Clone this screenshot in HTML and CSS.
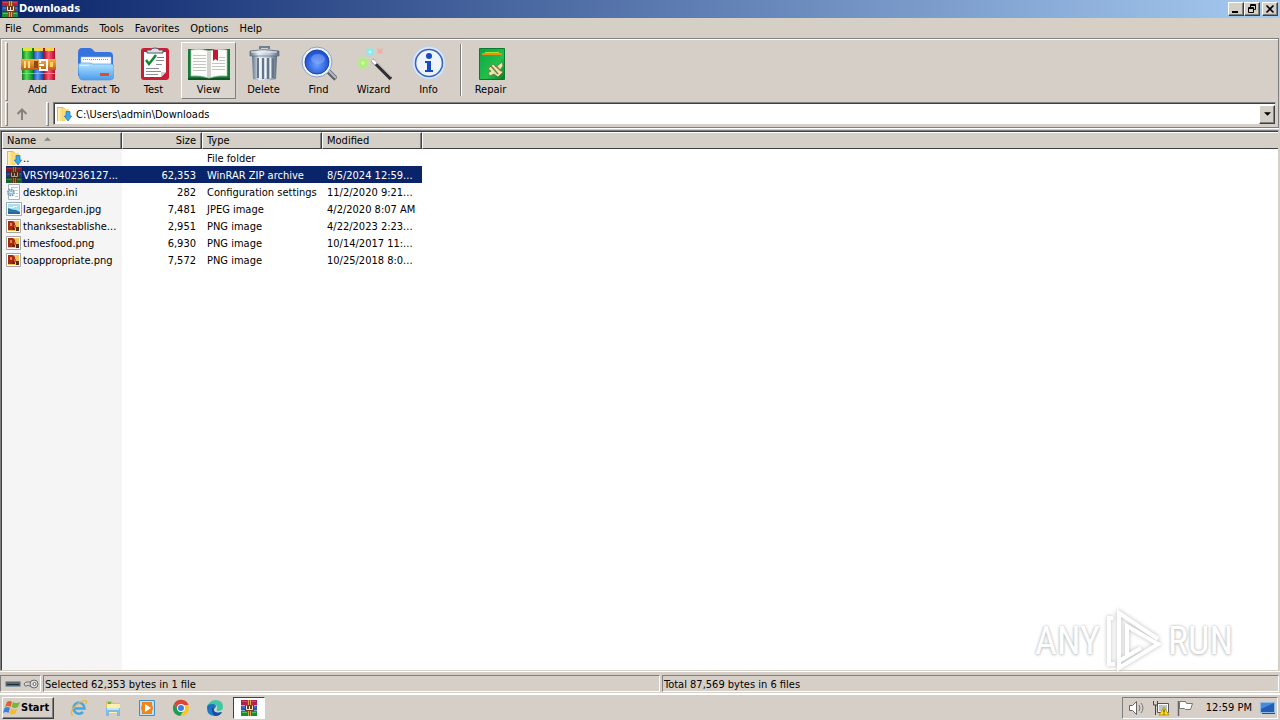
FILE: index.html
```html
<!DOCTYPE html>
<html lang="en">
<head>
<meta charset="utf-8">
<title>Downloads</title>
<link rel="stylesheet" href="styles.css">
</head>
<body>
<svg class="defs" aria-hidden="true">
  <defs>
    <linearGradient id="gGreen"><stop offset="0" stop-color="#087a20"/><stop offset=".4" stop-color="#5ade58"/><stop offset="1" stop-color="#07852b"/></linearGradient>
    <linearGradient id="gBlue"><stop offset="0" stop-color="#173f9c"/><stop offset=".4" stop-color="#5a9cf5"/><stop offset="1" stop-color="#163a96"/></linearGradient>
    <linearGradient id="gRed"><stop offset="0" stop-color="#a80c26"/><stop offset=".4" stop-color="#ff5a72"/><stop offset="1" stop-color="#b00d2c"/></linearGradient>
    <linearGradient id="gBelt" x2="0" y2="1"><stop offset="0" stop-color="#f9b04a"/><stop offset=".5" stop-color="#e08a2c"/><stop offset="1" stop-color="#b85c12"/></linearGradient>
    <linearGradient id="gFolder" x2="0" y2="1"><stop offset="0" stop-color="#b5e3ff"/><stop offset="1" stop-color="#4a9cec"/></linearGradient>
    <linearGradient id="gMetal"><stop offset="0" stop-color="#66758a"/><stop offset=".3" stop-color="#e6edf5"/><stop offset=".7" stop-color="#b4c2d2"/><stop offset="1" stop-color="#5b697c"/></linearGradient>
    <radialGradient id="gLens" cx=".5" cy=".6"><stop offset="0" stop-color="#6fa0ff"/><stop offset="1" stop-color="#1f55d4"/></radialGradient>
    <linearGradient id="gRepair" x2="1" y2="1"><stop offset="0" stop-color="#0aa545"/><stop offset=".6" stop-color="#23c04a"/><stop offset="1" stop-color="#087d2c"/></linearGradient>
    <radialGradient id="gSpark"><stop offset="0" stop-color="#eaffc8"/><stop offset=".4" stop-color="#a6f26a"/><stop offset="1" stop-color="#a6ff6a" stop-opacity="0"/></radialGradient>
    <radialGradient id="gSpark2"><stop offset="0" stop-color="#fff"/><stop offset=".4" stop-color="#75f2f0"/><stop offset="1" stop-color="#75f2f0" stop-opacity="0"/></radialGradient>
    <linearGradient id="gYellow"><stop offset="0" stop-color="#fff3b0"/><stop offset="1" stop-color="#efc65a"/></linearGradient>
    <linearGradient id="gEdge" x2="1" y2="1"><stop offset="0" stop-color="#1b63b8"/><stop offset="1" stop-color="#1d9be0"/></linearGradient>
  </defs>
  <symbol id="rar" viewBox="0 0 16 16">
    <path fill="#b31f4b" d="M0 0h16v5H0z"/><path fill="#2b55a8" d="M0 5.500h16v5H0z"/><path fill="#1f8a3a" d="M0 11h16v5H0z"/>
    <path fill="#e43d5f" d="M1 1h14v1H1z"/><path fill="#5d8ce0" d="M1 6.500h14v1H1z"/><path fill="#4fc45d" d="M1 12h14v1H1z"/>
    <path fill="#8c4f1c" d="M6 0h5v16H6z"/><path fill="#d9a24b" d="M7 0h1v16H7zM9 0h1v16H9z"/>
    <path fill="#703a20" d="M4 5h9v6H4z"/><path fill="none" stroke="#f4ead8" d="M5.500 5.500v4h6v-4M8.500 6v3"/>
  </symbol>
  <symbol id="dlfolder" viewBox="0 0 16 16">
    <path fill="#e3b94f" d="M1 1h6l2 2v12H1z"/><path fill="url(#gYellow)" d="M2 2h7v13H2z"/><path fill="#f9dc7f" d="M7 3h6v11H7z"/>
    <path fill="#38a9ea" stroke="#1d73b8" stroke-width=".7" d="M10 5.500h4v4.500h1.700L12 15 8.300 10H10z"/>
  </symbol>
  <symbol id="ini" viewBox="0 0 16 16">
    <path fill="#fff" stroke="#a4b4bf" d="M2.500.5h11v15h-11z"/><path stroke="#b8cad6" d="M5 3.500h7M9 6.500h3M10 9.500h2M9 12.500h3"/>
    <circle cx="5" cy="8.500" r="3" fill="#dceaf1" stroke="#6696b1" stroke-width="2" stroke-dasharray="1.500 .8"/><circle cx="5" cy="8.500" r="1.200" fill="#fff" stroke="#6b8da3" stroke-width=".6"/>
  </symbol>
  <symbol id="jpg" viewBox="0 0 16 16">
    <path fill="#fff" stroke="#9aabb5" d="M.5 1.500h15v13H.5z"/><path fill="#a7def4" d="M2 3h12v10H2z"/><path fill="#277d8f" d="M2 7l4 1.500 4 .5 4 2v1H2z"/><path fill="#2a64a7" d="M2 11h12v2H2z"/><path fill="#fff" d="M3 6h5v1H3zM7 5h4v1H7z"/>
  </symbol>
  <symbol id="png" viewBox="0 0 16 16">
    <path fill="#fff" stroke="#a7a59f" d="M.5 1.500h14v13H.5z"/><path fill="#f3c15c" d="M2 3h11v10H2z"/><path fill="#a6281a" d="M2 3h5l2 2v4l-3 3H2z"/><path fill="#e08a35" d="M4 5h2v3H4z"/><path fill="#5b2a12" d="M7 9h2v3H6zM10 9h3v4h-3z"/><path fill="#d75b18" d="M8 7h2v3H8z"/>
  </symbol>
</svg>

<header class="titlebar">
  <svg class="ico"><use href="#rar"/></svg>
  <h1 class="title">Downloads</h1>
  <div class="winbtns">
    <button class="winbtn" aria-label="Minimize"><svg viewBox="0 0 12 10"><path fill="#000" d="M2 7h6v2H2z"/></svg></button>
    <button class="winbtn" aria-label="Restore"><svg viewBox="0 0 12 10"><path fill="none" stroke="#000" d="M4.500 3V.5h5v5H8M4 1.500h6M2.500 3.500h5v5h-5zM2 4.500h6"/></svg></button>
    <button class="winbtn close" aria-label="Close"><svg viewBox="0 0 12 10"><path stroke="#000" stroke-width="1.600" d="M2.500 1.500l7 7M9.500 1.500l-7 7"/></svg></button>
  </div>
</header>

<nav class="menubar">
  <button>File</button><button>Commands</button><button>Tools</button><button>Favorites</button><button>Options</button><button>Help</button>
</nav>

<div class="rebar">
  <div class="toolbar">
    <span class="grip"></span>
    <button class="tool"><svg viewBox="0 0 36 36">
      <path fill="url(#gGreen)" d="M2 2h11v32H2z"/><path fill="url(#gBlue)" d="M13 2h11v32H13z"/><path fill="url(#gRed)" d="M24 2h11v32H24z"/>
      <path fill="#d7e83b" d="M3 2h9v3H3z"/><path fill="#f3d54c" d="M14 2h9v3h-9zM25 2h9v3h-9z"/>
      <path fill="#eec84c" opacity=".7" d="M2 27h11v1H2zM13 27h11v1H13zM24 27h11v1H24z"/>
      <path fill="url(#gBelt)" d="M1 13h35v11H1z"/><path fill="#ffe18a" d="M4 15h2v7H4zM8 15h2v7H8z"/>
      <path fill="#8f4a0f" d="M14 15h4v7h-4z"/><path fill="none" stroke="#fff" stroke-width="2" d="M20 17v-3h7v10h-7v-3M19 19h5"/><path fill="#ffd15d" d="M30 16h3v5h-3z"/>
    </svg><span>Add</span></button>
    <button class="tool wide"><svg viewBox="0 0 36 36">
      <path fill="#3573df" d="M0 7q0-5 4-5h8q2 0 4 3l1 1h14q4 0 4 4v20H0z"/><path fill="#fff" stroke="#a8bdd4" stroke-width=".6" d="M3 11h30v12H3z"/><path stroke="#8d98aa" stroke-dasharray="1 1" d="M5 13.500h25"/>
      <path fill="url(#gFolder)" stroke="#4c9be6" stroke-width=".7" d="M0 20q0-3 3-3h9l3 1h18q3 0 3 3v9q0 4-5 4H5q-4 0-4-4z"/><path fill="#e14c26" d="M22 27h9v3h-9z"/><path stroke="#fff" opacity=".6" d="M2 19.500h9"/>
    </svg><span>Extract To</span></button>
    <button class="tool"><svg viewBox="0 0 36 36">
      <rect x="5" y="2" width="28" height="32" rx="3" fill="#c91f36"/><path fill="#fff" d="M8 6h22v20l-5 5H8z"/><path fill="#ccd1d5" d="M30 26h-5v5z"/>
      <path fill="#dce0e5" stroke="#535a63" d="M11 7V4h4q0-2 4-2t4 2h4v3z"/><path fill="none" stroke="#168731" stroke-width="2.500" d="M10 14l3 4 7-9"/>
      <path stroke="#8b8c97" d="M20 14.500h8M20 18.500h6M10 22.500h13M10 25.500h15M10 28.500h12"/><path stroke="#dd5262" d="M21 11.500h7"/>
    </svg><span>Test</span></button>
    <button class="tool pressed" aria-pressed="true"><svg class="book" viewBox="0 0 42 36">
      <path fill="#127c36" d="M0 3h42v31H0z"/><path fill="#0a5726" d="M0 32h42v2H0z"/><path fill="#fcfcf8" stroke="#b9c6b8" stroke-width=".7" d="M3 4q9-2 18 1 9-3 18-1v26q-9-1-18 2-9-3-18-2z"/>
      <path fill="#b8b8b2" opacity=".6" d="M19 5l2 1 2-1v26l-2 1-2-1z"/><path fill="none" stroke="#b4b6b6" stroke-width=".8" d="M5 9.500h13M5 12.500h13M5 15.500h13M5 18.500h13M5 21.500h13M5 24.500h13M24 17.500h13M24 20.500h13M24 23.500h13M31 11.500h6M31 14.500h6"/>
      <path fill="#c41932" d="M25 4h5v11l-2.500-2-2.500 2z"/>
    </svg><span>View</span></button>
    <button class="tool"><svg viewBox="0 0 36 36">
      <path fill="none" stroke="#737f8c" stroke-width="2" d="M14 3V1h9v2"/><path fill="url(#gMetal)" d="M6 10h25l-1 23q-12 3-23 0z"/>
      <path fill="none" stroke="#66758b" stroke-width="2" d="M12 12v20M17 12v21M22 12v21M27 12v20"/><path stroke="#fff" opacity=".8" d="M14 12v20M19.500 12v20M24.500 12v20"/>
      <path fill="url(#gMetal)" stroke="#5b6878" stroke-width=".7" d="M4 5q14-3 29 0v5H4z"/><path stroke="#eef5fb" d="M5 6h26"/>
    </svg><span>Delete</span></button>
    <button class="tool"><svg viewBox="0 0 36 36">
      <path stroke="#5c636d" stroke-width="5" d="M25 23l10 10"/><path stroke="#b8bec5" stroke-width="2" d="M26 23l9 9"/><circle cx="16" cy="16" r="15" fill="#edf3fa" stroke="#8aa2c6"/><circle cx="16" cy="16" r="12" fill="url(#gLens)" stroke="#2044a0"/><ellipse cx="17" cy="13" rx="7" ry="5" fill="#9bbcff" opacity=".4"/>
    </svg><span>Find</span></button>
    <button class="tool"><svg viewBox="0 0 36 36">
      <circle cx="7" cy="17" r="7" fill="url(#gSpark)"/><circle cx="14" cy="6" r="5" fill="url(#gSpark2)"/><path fill="#f4a6a1" opacity=".8" d="M21 2l3 1 3-1-1 3 1 3-3-1-3 1 1-3z"/><path stroke="#322e31" stroke-width="3.500" d="M16 14l19 19"/><path stroke="#a6a3a4" d="M18 14l17 17"/><path stroke="#fff" stroke-width="3" d="M16 14l4 4"/>
    </svg><span>Wizard</span></button>
    <button class="tool"><svg viewBox="0 0 36 36">
      <circle cx="18" cy="17" r="16.500" fill="#dbe6fa" stroke="#c1d1ee"/><circle cx="18" cy="17" r="13.500" fill="#edf3ff" stroke="#3765bb" stroke-width="1.600"/><circle cx="18" cy="10" r="3" fill="#1949be"/><path fill="#1949be" d="M14 15h6v9h2v2h-8v-2h2v-7h-2z"/>
    </svg><span>Info</span></button>
    <span class="sep"></span>
    <button class="tool"><svg viewBox="0 0 36 36">
      <path fill="url(#gRepair)" stroke="#087c2e" d="M6.500 2.500h25v31h-25z"/><path fill="#f28d13" d="M9 7h20v2H9z"/><path fill="#b4dc31" d="M12 6h14v1H12z"/><path fill="#e9e4b0" stroke="#60702d" stroke-width=".7" d="M15 23l5-5 3 3 6-5 1 4-3 4 3 2-5 5-4-3-4 2-2-3 3-2z"/><path stroke="#7e7b42" stroke-width="1.500" d="M18 20l7 8M23 20l5 5"/>
    </svg><span>Repair</span></button>
  </div>
  <div class="address">
    <span class="grip"></span>
    <button class="up" aria-label="Up one level"><svg viewBox="0 0 12 12"><path fill="none" stroke="#85827b" stroke-width="2" d="M6 12V2M1.500 6L6 1.500 10.500 6"/></svg></button>
    <span class="grip second"></span>
    <div class="combo">
      <svg class="ico"><use href="#dlfolder"/></svg>
      <input type="text" aria-label="Path" value="C:\Users\admin\Downloads">
      <button class="drop" aria-label="Show locations"><svg viewBox="0 0 8 4"><path d="M0 0h8L4 4z"/></svg></button>
    </div>
  </div>
</div>

<main class="list">
  <table>
    <colgroup><col class="c-name"><col class="c-size"><col class="c-type"><col class="c-mod"><col></colgroup>
    <thead><tr><th>Name <svg class="sort" viewBox="0 0 8 4"><path fill="#85827b" d="M0 4l4-4 4 4z"/></svg></th><th class="num">Size</th><th>Type</th><th>Modified</th><th class="rest"></th></tr></thead>
    <tbody>
      <tr><td><div class="file"><svg class="ico"><use href="#dlfolder"/></svg><span>..</span></div></td><td></td><td>File folder</td><td></td></tr>
      <tr class="selected"><td><div class="file"><svg class="ico"><use href="#rar"/></svg><span>VRSYI940236127...</span></div></td><td class="num">62,353</td><td>WinRAR ZIP archive</td><td>8/5/2024 12:59...</td></tr>
      <tr><td><div class="file"><svg class="ico"><use href="#ini"/></svg><span>desktop.ini</span></div></td><td class="num">282</td><td>Configuration settings</td><td>11/2/2020 9:21...</td></tr>
      <tr><td><div class="file"><svg class="ico"><use href="#jpg"/></svg><span>largegarden.jpg</span></div></td><td class="num">7,481</td><td>JPEG image</td><td>4/2/2020 8:07 AM</td></tr>
      <tr><td><div class="file"><svg class="ico"><use href="#png"/></svg><span>thanksestablishe...</span></div></td><td class="num">2,951</td><td>PNG image</td><td>4/22/2023 2:23...</td></tr>
      <tr><td><div class="file"><svg class="ico"><use href="#png"/></svg><span>timesfood.png</span></div></td><td class="num">6,930</td><td>PNG image</td><td>10/14/2017 11:...</td></tr>
      <tr><td><div class="file"><svg class="ico"><use href="#png"/></svg><span>toappropriate.png</span></div></td><td class="num">7,572</td><td>PNG image</td><td>10/25/2018 8:0...</td></tr>
    </tbody>
  </table>
  <div class="watermark"><span>ANY</span>
    <svg viewBox="0 0 58 64"><path fill="none" stroke="#fff" stroke-width="4" d="M8 9H4v46h6M14 50V4l39 26M22 47V17l31 18L14 59v-7l22-13"/></svg>
    <span>RUN</span></div>
</main>

<footer class="status">
  <div class="panel icons">
    <svg viewBox="0 0 16 10"><rect x=".5" y="2.500" width="15" height="5" rx="1" fill="#536877" stroke="#8d9ba5"/><path stroke="#242d35" d="M2 5.500h12"/></svg>
    <svg viewBox="0 0 16 10"><path fill="#d4d4d4" stroke="#707070" d="M8 3H3L1 5l1 2h2l1-1 1 1h2z"/><circle cx="11" cy="5" r="4" fill="#ddd" stroke="#6c6c6c"/><circle cx="11.500" cy="5" r="1.500" fill="#fff" stroke="#666"/></svg>
  </div>
  <div class="panel">Selected 62,353 bytes in 1 file</div>
  <div class="panel">Total 87,569 bytes in 6 files</div>
</footer>

<div class="taskbar">
  <button class="start"><svg viewBox="0 0 17 16"><path fill="#ec5a27" d="M4 2q3-2 5 0L7.500 7Q5 5 2 7z"/><path fill="#79b735" d="M10 2q3 2 7 0l-2 5q-3 2-6.500 0z"/><path fill="#3b83d8" d="M1.500 8q3-2 5.500 0l-1.500 5Q3 11 0 13z"/><path fill="#f3bd2c" d="M8 8.500q3 2 6.500 0l-2 5q-3 2-6 0z"/></svg>Start</button>
  <div class="quick">
    <button aria-label="Internet Explorer"><svg viewBox="0 0 18 18"><path fill="none" stroke="#42a9e4" stroke-width="2.600" d="M4 9.500h10.500A5.500 5.500 0 1 0 13 13"/><path fill="none" stroke="#e9b73c" stroke-width="1.300" d="M3 16C-2 15 5 5 13 2q5-2 3 3"/></svg></button>
    <button aria-label="Explorer"><svg viewBox="0 0 18 18"><path fill="#e6bf5a" d="M2 2h6l1 2h7v9H2z"/><path fill="#fff0ad" d="M3 5h13v9H3z"/><path fill="#7fbbe2" d="M2 9h14v8h-3v-4H5v4H2z"/><path fill="#c4e5f5" d="M3 9h12v2H3z"/><path fill="#64b43e" d="M4 3h3v2H4z"/></svg></button>
    <button aria-label="Media Player"><svg viewBox="0 0 18 18"><path fill="#bce1fa" stroke="#3d91c8" d="M1.500 1.500h15v15h-15z"/><path fill="#f08418" d="M4 3h10v12H4z"/><circle cx="9" cy="9" r="6" fill="#f08418"/><path fill="#fff" d="M7 5l6 4-6 4z"/></svg></button>
    <button aria-label="Chrome"><svg viewBox="0 0 18 18"><circle cx="9" cy="9" r="8" fill="#f5c52a"/><path fill="#db4437" d="M2 5a8 8 0 0 1 14.500 1H9L6 11z"/><path fill="#199d58" d="M2 5a8 8 0 0 0 6 12l4-6H6z"/><circle cx="9" cy="9" r="4" fill="#fff"/><circle cx="9" cy="9" r="3" fill="#397de6"/></svg></button>
    <button aria-label="Edge"><svg viewBox="0 0 18 18"><path fill="url(#gEdge)" d="M1 9Q1 4 6 4q4 0 4 4-2 1-2 3 0 4 8 2-2 4-7 4-8 0-8-8z"/><path fill="#42c8a1" d="M1.500 7Q4 1 9.500 1 17 1 17 8q0 4-5 4-2 0-1-2 1-5-5-5-3 0-4.500 2z"/><path fill="#164e9d" d="M6 9q-1 5 3 8 5 0 7-4-6 2-8-1-1-2 0-4z"/></svg></button>
  </div>
  <button class="task" aria-label="WinRAR"><svg class="ico"><use href="#rar"/></svg></button>
  <div class="tray">
    <svg viewBox="0 0 18 16"><path fill="#fff" stroke="#656565" d="M1.500 5.500h3l4-4v13l-4-4h-3z"/><path fill="none" stroke="#777" d="M11 5q2 3 0 6M13 3q4 5 0 10"/></svg>
    <svg viewBox="0 0 18 16"><path fill="#fff" stroke="#555" d="M5.500 3.500h11v9h-11z"/><path fill="#b9c5ce" d="M7 5h8v6H7z"/><path fill="none" stroke="#444" d="M1.500 1v4h4V1M3.500 5v10"/><path fill="#ffdc1a" stroke="#a87e00" stroke-width=".7" d="M12 7l5 8H7z"/><path stroke="#222" d="M12 9.500v3M12 13.500v1"/></svg>
    <svg viewBox="0 0 18 16"><path stroke="#666" stroke-width="1.500" d="M2.500 1v15"/><path fill="#fff" stroke="#777" d="M3.500 1.500h6l1 2h6l-2 6h-5l-1-1h-5z"/></svg>
    <time>12:59 PM</time>
    <svg viewBox="0 0 18 16"><path fill="#235eb3" stroke="#8fb9e5" d="M1.500 2.500h14v10h-14z"/><path fill="#4a8ad8" d="M2 3h13L2 9z"/><path fill="#2c4f86" d="M3 13h13v1H3z"/></svg>
  </div>
</div>
</body>
</html>
```
FILE: styles.css
```css
* { box-sizing: border-box; }
body {
  margin: 0;
  min-height: 100vh;
  display: flex;
  flex-direction: column;
  background: #d6cfc8;
  color: #000;
  font: 11px/14px Tahoma, "DejaVu Sans Condensed", "DejaVu Sans", sans-serif;
}
button, input { font: inherit; color: inherit; margin: 0; padding: 0; border: 0; background: none; }
svg { display: block; flex: none; }
.defs { position: absolute; width: 0; height: 0; }
.ico { width: 16px; height: 16px; }

.titlebar { display: flex; align-items: center; gap: 1px; height: 18px; padding: 0 2px; background: linear-gradient(90deg, #0a246a, #a6caf0); color: #fff; }
.title { flex: 1; margin: 0; font-size: 11px; font-weight: bold; }
.winbtns { display: flex; }
.winbtn { display: grid; place-items: center; width: 16px; height: 14px; background: #d4d0c8; border: 1px solid; border-color: #fff #404040 #404040 #fff; box-shadow: inset -1px -1px #808080; }
.winbtn svg { width: 12px; height: 10px; }
.close { margin-left: 2px; }

.menubar { display: flex; gap: 11px; height: 20px; padding: 2px 5px 0; align-items: center; background: #d5cfc6; }

.rebar { border: 1px solid #808080; border-left-color: #a09c94; margin-right: 1px; box-shadow: inset 1px 1px #fff, 0 1px #fff; padding: 2px 2px 1px 4px; }
.toolbar { display: flex; align-items: stretch; height: 61px; padding: 1px 0; }
.grip { width: 3px; margin-right: 2px; background: #d6cfc8; border: 1px solid; border-color: #fff #808080 #808080 #fff; }
.tool { display: flex; flex-direction: column; align-items: center; gap: 1px; width: 55px; padding-top: 3px; border: 1px solid transparent; height: 57px; }
.tool svg { width: 36px; height: 36px; }
.tool .book { width: 42px; }
.wide { width: 61px; }
.pressed { border-color: #fff #808080 #808080 #fff; background: #dad5ce; }
.sep { width: 2px; margin: 2px 1px 5px 4px; border-left: 1px solid #808080; border-right: 1px solid #fff; }
.address { display: flex; height: 24px; align-items: stretch; }
.up { display: grid; place-items: center; width: 24px; }
.up svg { width: 12px; height: 12px; }
.second.grip { margin-left: 12px; }
.combo { flex: 1; display: flex; align-items: center; gap: 4px; margin: 0 0 1px 2px; padding-left: 2px; background: #fff; border: 1px solid; border-color: #808080 #d4d0c8 #d4d0c8 #808080; box-shadow: inset 1px 1px #404040; }
.combo input { flex: 1; height: 18px; padding-top: 1px; outline: 0; }
.drop { display: grid; place-items: center; width: 16px; height: 19px; margin-top: 1px; background: #d4d0c8; border: 1px solid; border-color: #fff #404040 #404040 #fff; box-shadow: inset -1px -1px #808080; }
.drop svg { width: 7px; height: 4px; }

.list { position: relative; flex: 1; margin: 2px 1px 0 0; border: 1px solid; border-color: #808080 #d4d0c8 #d4d0c8 #808080; box-shadow: inset 1px 1px #404040; padding: 1px 0 0 1px; background: linear-gradient(#f5f5f5, #f5f5f5) 1px 0 / 120px 100% no-repeat #fff; }
table { width: 100%; table-layout: fixed; border-collapse: separate; border-spacing: 0; }
.c-name { width: 120px; }
.c-size { width: 80px; }
.c-type { width: 120px; }
.c-mod { width: 100px; }
th, td { height: 17px; white-space: nowrap; text-align: left; font-weight: normal; }
th { background: #d4d0c8; border: 1px solid; border-color: #fff #404040 #404040 #fff; box-shadow: inset -1px 0 #808080; padding: 1px 4px 0; }
td { padding: 2px 0 0 5px; }
.rest { border-right: 0; box-shadow: none; }
td:first-child { padding: 0 0 0 4px; }
.num { text-align: right; }
th.num { padding-right: 5px; }
td.num { padding-right: 6px; }
.sort { display: inline-block; width: 7px; height: 4px; margin-left: 5px; vertical-align: 3px; }
.file { display: flex; align-items: center; height: 17px; }
.file span { flex: 1; padding: 2px 0 0 1px; }
.selected td { background: #0a246a; color: #fff; }
.selected td:first-child { background: linear-gradient(90deg, #f5f5f5 4px, #0a246a 4px); }
.selected .ico { filter: brightness(0.7); }
.watermark { position: absolute; right: 45px; bottom: -3px; display: flex; align-items: center; gap: 5px; color: #fff; font: 38px/62px "Liberation Sans Narrow", "Roboto Condensed", sans-serif; text-shadow: 0 0 3px #bbb, 0 1px 3px #ccc; }
.watermark svg { width: 58px; height: 64px; filter: drop-shadow(0 0 2px #bbb); }

.status { display: flex; gap: 2px; height: 23px; padding: 3px 1px 1px 0; border-top: 1px solid #fff; border-bottom: 1px solid #fff; }
.panel { flex: 1; border: 1px solid; border-color: #808080 #fff #fff #808080; padding: 2px 1px 0; }
.icons { flex: none; display: flex; align-items: center; gap: 2px; width: 41px; padding: 0 0 0 4px; }
.icons svg { width: 16px; height: 10px; }

.taskbar { display: flex; align-items: center; height: 26px; padding: 0 2px; border-top: 1px solid #fff; }
.start { display: flex; align-items: center; gap: 1px; width: 52px; height: 22px; font-size: 11px; font-weight: bold; border: 1px solid; border-color: #fff #404040 #404040 #fff; box-shadow: inset -1px -1px #808080; }
.start svg { width: 17px; height: 16px; }
.quick { display: flex; gap: 16px; margin: 0 9px 0 16px; }
.quick svg { width: 18px; height: 18px; }
.task { display: grid; place-items: center; width: 32px; height: 22px; background: #fff; border: 1px solid; border-color: #404040 #fff #fff #404040; }
.tray { display: flex; align-items: center; gap: 6px; margin-left: auto; height: 22px; padding: 0 0 0 5px; border: 1px solid; border-color: #808080 #fff #fff #808080; }
.tray svg { width: 18px; height: 16px; }
.tray time { margin: 0 1px 0 6px; }
```
